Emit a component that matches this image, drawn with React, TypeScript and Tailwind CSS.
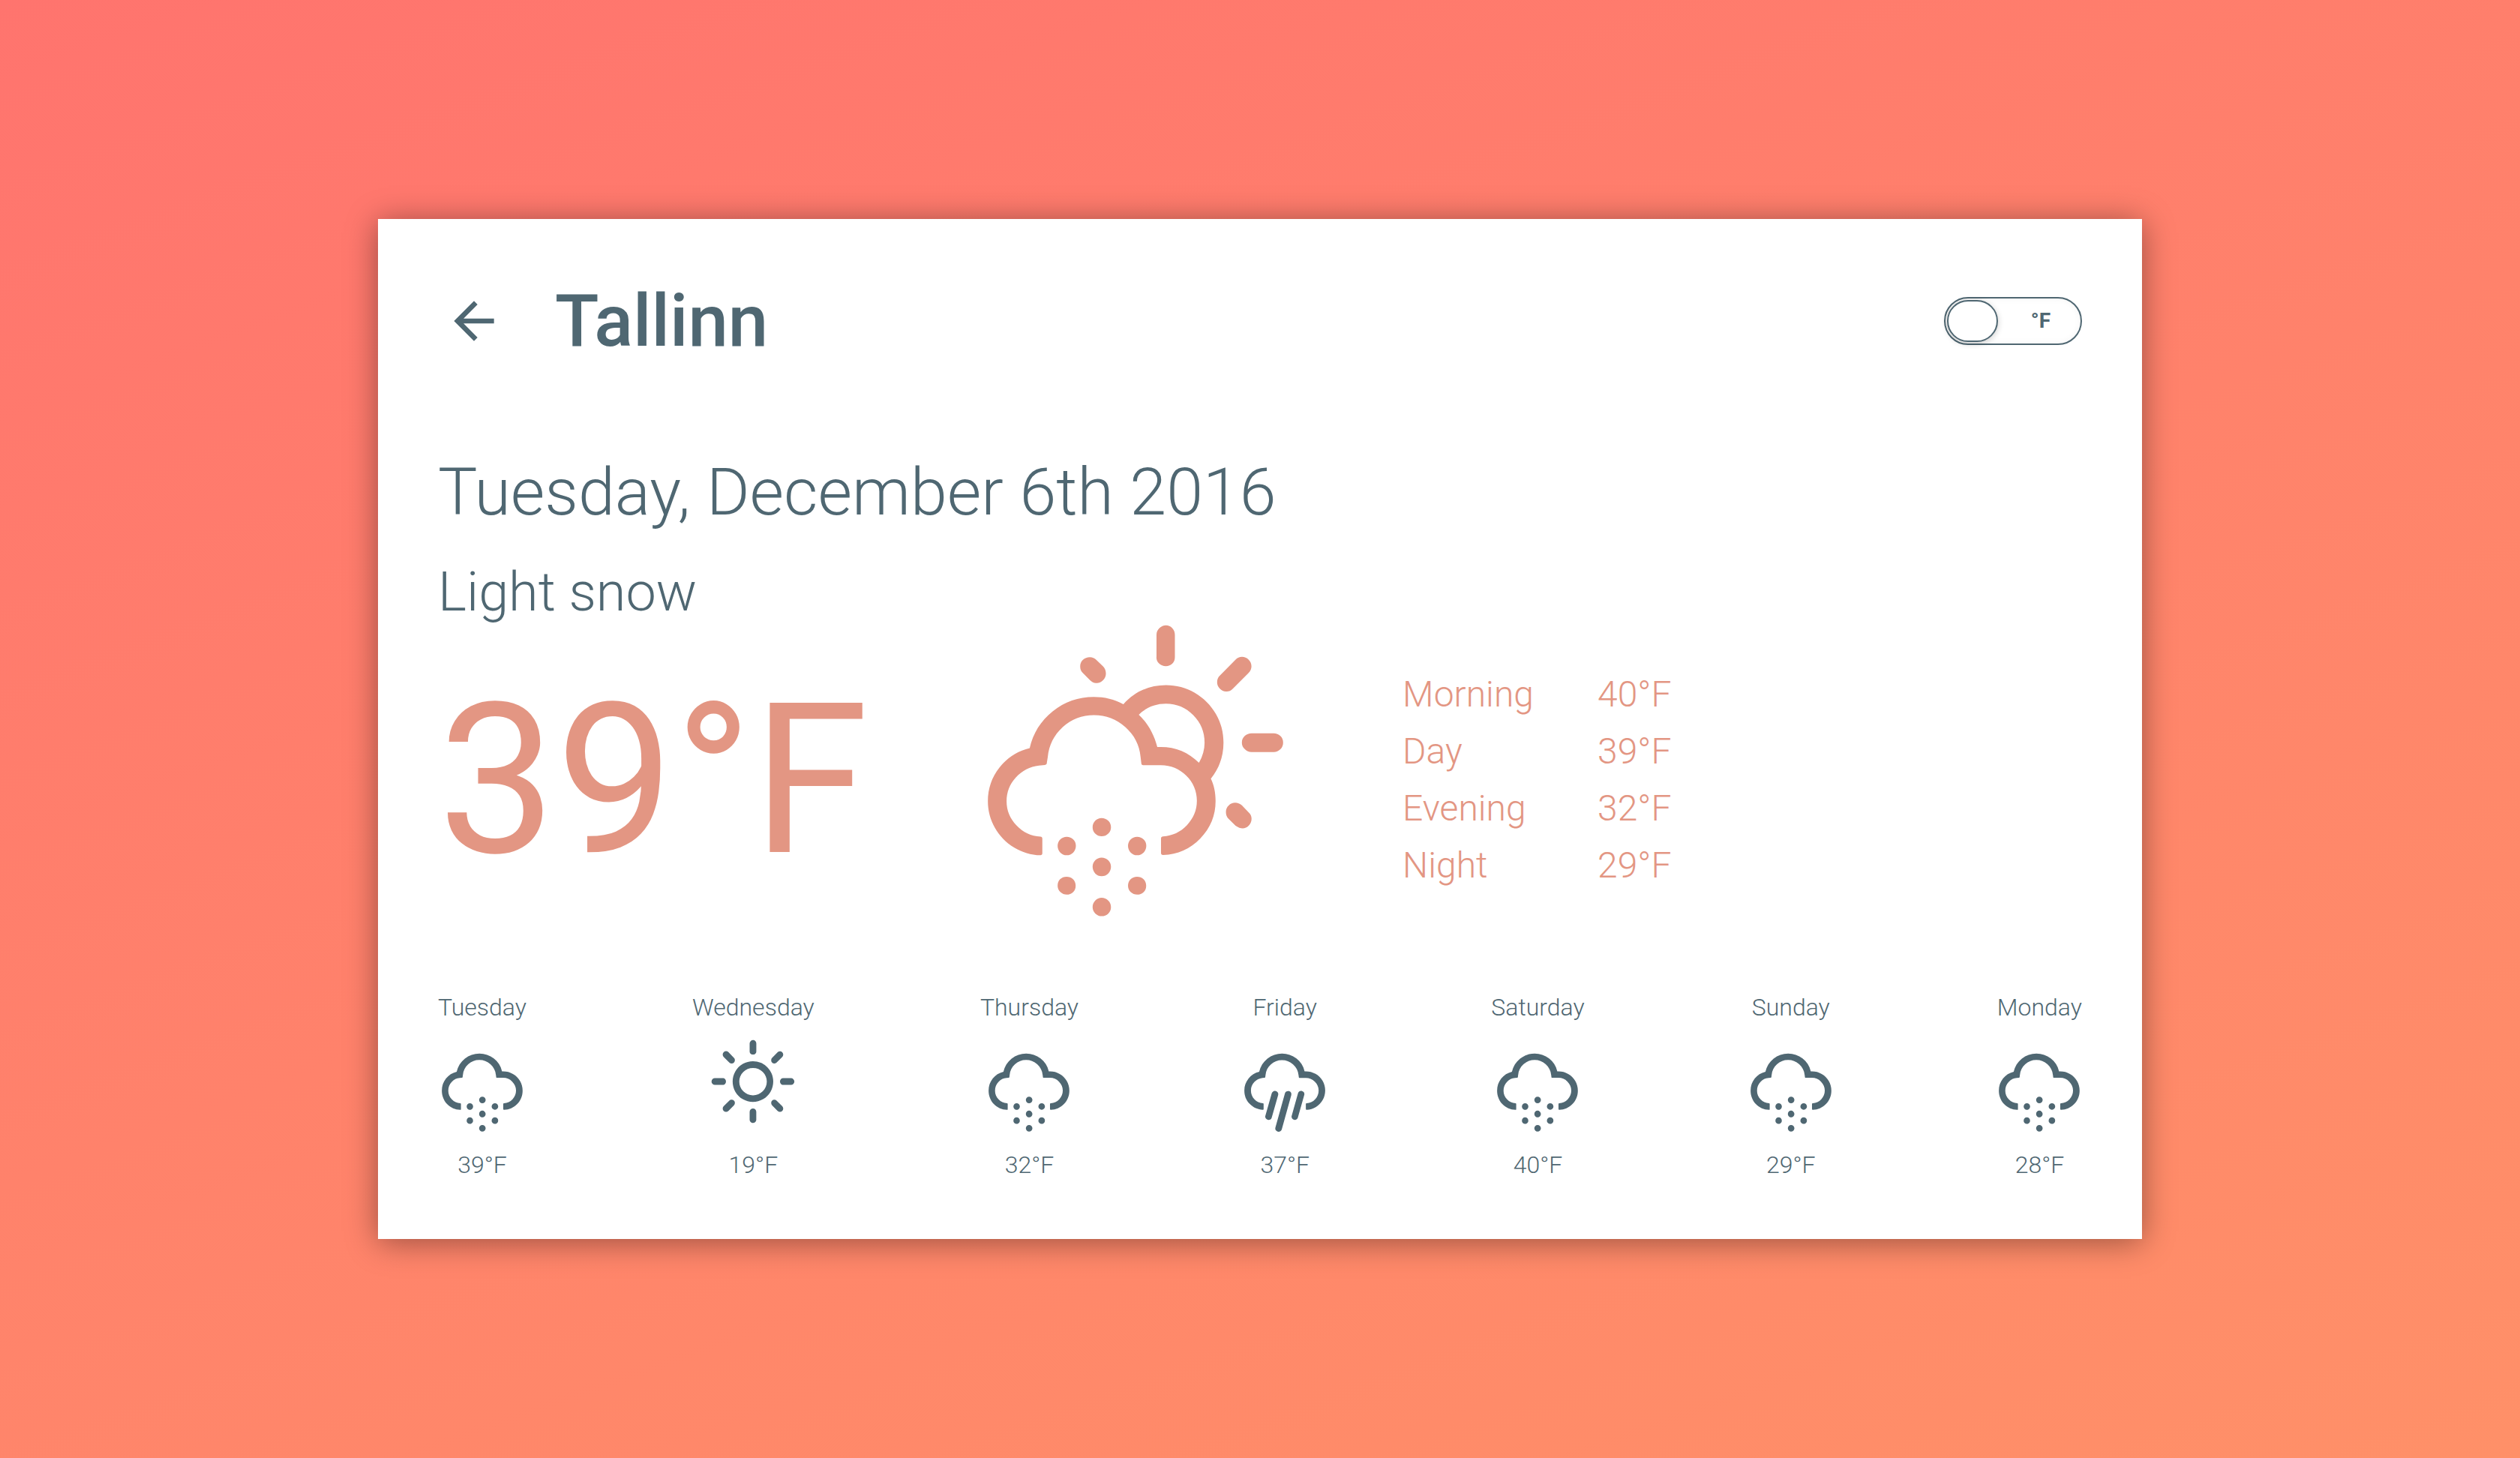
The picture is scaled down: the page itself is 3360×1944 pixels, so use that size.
import React, { useState } from "react";
import { MdArrowBack } from "react-icons/md";
import { WiDaySnow, WiDaySunny, WiRain, WiSnow } from "react-icons/wi";
import type { IconType } from "react-icons";

const PERIODS = [
  { name: "Morning", temp: 40 },
  { name: "Day", temp: 39 },
  { name: "Evening", temp: 32 },
  { name: "Night", temp: 29 },
];

const FORECAST: { day: string; Icon: IconType; temp: number }[] = [
  { day: "Tuesday", Icon: WiSnow, temp: 39 },
  { day: "Wednesday", Icon: WiDaySunny, temp: 19 },
  { day: "Thursday", Icon: WiSnow, temp: 32 },
  { day: "Friday", Icon: WiRain, temp: 37 },
  { day: "Saturday", Icon: WiSnow, temp: 40 },
  { day: "Sunday", Icon: WiSnow, temp: 29 },
  { day: "Monday", Icon: WiSnow, temp: 28 },
];

function UnitToggle({ celsius, onChange }: { celsius: boolean; onChange: (celsius: boolean) => void }) {
  return (
    <label className="relative flex h-16 w-46 cursor-pointer items-center rounded-full border-2 border-[#4f6772] bg-white shadow-[inset_0_0_10px_rgba(0,0,0,0.05)]">
      <input
        type="checkbox"
        role="switch"
        aria-label="Temperature unit"
        checked={celsius}
        onChange={(e) => onChange(e.target.checked)}
        className="peer absolute inset-0 cursor-pointer appearance-none"
      />
      <span className="ml-0.5 h-14 w-17 rounded-full border-2 border-[#4f6772] bg-white shadow-[0_2px_8px_rgba(0,0,0,0.2)] peer-checked:order-2 peer-checked:mr-0.5" />
      <span className="flex-1 pl-1 text-center text-[28px] leading-8 font-bold">{celsius ? "°C" : "°F"}</span>
    </label>
  );
}

export default function App() {
  const [celsius, setCelsius] = useState(false);
  const format = (f: number) => (celsius ? `${Math.round(((f - 32) * 5) / 9)}°C` : `${f}°F`);

  return (
    <div className="flex min-h-screen items-center justify-center bg-[linear-gradient(160deg,#ff746e,#ff9068)] font-['Roboto',sans-serif] font-light text-[#4f6772]">
      <main className="w-[70%] bg-white p-20 shadow-[0_4px_40px_rgba(0,0,0,0.4)]">
        <header className="flex items-center justify-between">
          <div className="flex items-center">
            <button type="button" aria-label="Back" className="ml-2 cursor-pointer">
              <MdArrowBack size={80} />
            </button>
            <h1 className="ml-17 text-[96px] leading-[112px] font-medium">Tallinn</h1>
          </div>
          <UnitToggle celsius={celsius} onChange={setCelsius} />
        </header>

        <h2 className="mt-30 text-[88px] leading-[104px]">Tuesday, December 6th 2016</h2>
        <p className="mt-10 text-[72px] leading-[84px]">Light snow</p>

        <section className="-mt-3 flex items-center text-[#e39683]">
          <p className="text-[280px] leading-[328px] font-normal">{format(39)}</p>
          <WiDaySnow size={440} className="ml-34" />
          <table className="ml-34 text-left text-[48px] leading-[76px]">
            <tbody>
              {PERIODS.map(({ name, temp }) => (
                <tr key={name}>
                  <th scope="row" className="w-65 font-light">{name}</th>
                  <td>{format(temp)}</td>
                </tr>
              ))}
            </tbody>
          </table>
        </section>

        <ul className="mt-16 flex justify-between">
          {FORECAST.map(({ day, Icon, temp }) => (
            <li key={day} className="flex flex-col items-center text-[32px] leading-[38px]">
              <span>{day}</span>
              <Icon size={156} className="-mx-6 mt-1 mb-3" />
              <span>{format(temp)}</span>
            </li>
          ))}
        </ul>
      </main>
    </div>
  );
}
